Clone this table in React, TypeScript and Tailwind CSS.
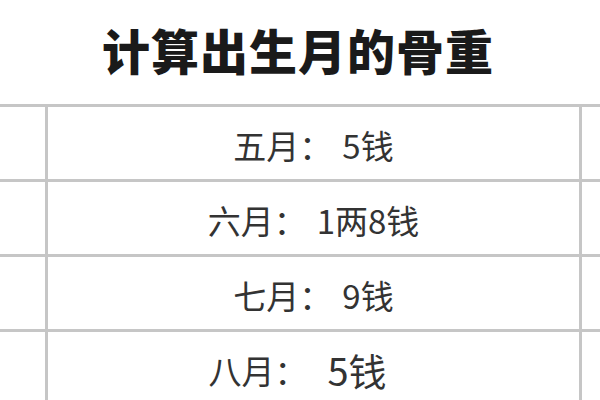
const rows = [
  { label: "五月：", value: "5钱", gap: "ml-[10px]", size: "text-[33px]", shift: "" },
  { label: "六月：", value: "1两8钱", gap: "ml-[10px]", size: "text-[33px]", shift: "" },
  { label: "七月：", value: "9钱", gap: "ml-[10px]", size: "text-[33px]", shift: "" },
  { label: "八月：", value: "5钱", gap: "ml-[20px]", size: "text-[38px]", shift: "pr-[32px]" },
]

export default function App() {
  return (
    <div
      className="w-[600px] h-[400px] overflow-hidden bg-white"
      style={{ fontFamily: '"Noto Sans CJK SC", "Noto Sans", sans-serif' }}
    >
      <div className="h-[104px] flex items-center pl-[102px] pb-[6px]">
        <h1 className="text-[48px] leading-none font-black text-[#1a1a1a] tracking-[1px]">计算出生月的骨重</h1>
      </div>
      <div className="border-t-[3px] border-[#c6c6c6]">
        {rows.map((row) => (
          <div key={row.label} className="grid grid-cols-[48px_534px_1fr] h-[75px] border-b-[3px] border-[#c6c6c6]">
            <div className="border-r-[3px] border-[#c6c6c6]" />
            <div className={`border-r-[3px] border-[#c6c6c6] flex items-center justify-center pt-[4px] ${row.shift}`}>
              <span className="text-[33px] leading-none text-[#333333]">{row.label}</span>
              <span className={`${row.gap} ${row.size} leading-none text-[#333333]`}>{row.value}</span>
            </div>
            <div />
          </div>
        ))}
      </div>
    </div>
  )
}
